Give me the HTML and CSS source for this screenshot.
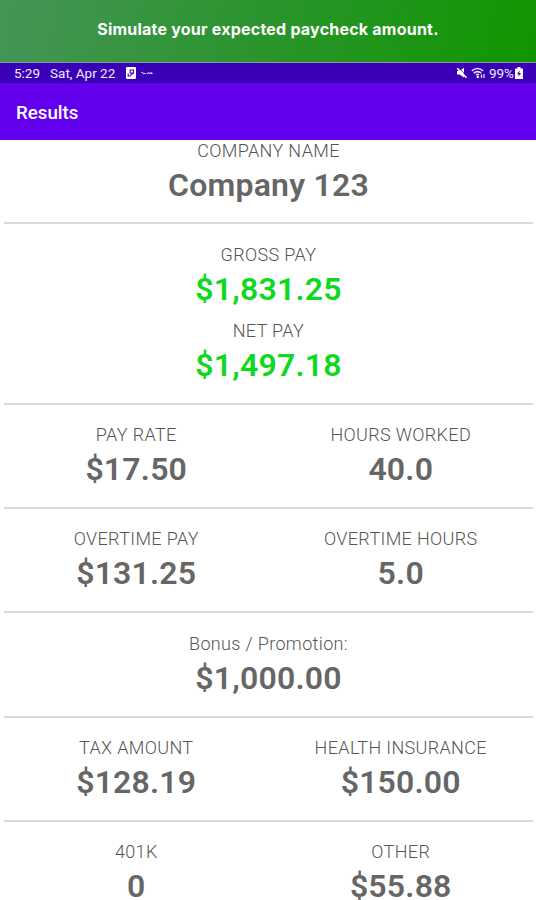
FILE: index.html
```html
<!DOCTYPE html>
<html lang="en">
<head>
  <meta charset="UTF-8">
  <meta name="viewport" content="width=device-width, initial-scale=1.0">
  <title>Results</title>
  <link rel="stylesheet" href="styles.css">
</head>
<body>

  <div class="banner"><span>Simulate your expected paycheck amount.</span></div>

  <div class="status-bar">
    <span class="time">5:29</span>
    <span class="date">Sat, Apr 22</span>
    <svg class="icon-app" width="10" height="12" viewBox="0 0 10 12">
      <rect width="10" height="12" rx="1" fill="#fff"/>
      <path d="M4.2 3H7.5V6H4.2ZM7.2 6L4.5 8.2M2.2 6.5V9H4.8" fill="none" stroke="#3a00b5" stroke-width="1.1"/>
    </svg>
    <svg class="icon-small" width="12" height="5" viewBox="0 0 12 5">
      <path d="M0.5 1L2.5 2.5H5M6 3L7.5 1.8L9 2.6L10.5 1.8L11.5 2.8" fill="none" stroke="#c9b8f0" stroke-width="1.2"/>
    </svg>
    <div class="status-right">
      <svg width="12" height="12" viewBox="0 0 12 12">
        <path d="M1 4H3.5L8 0.8V10.5L3.5 7.5H1Z" fill="#fff"/>
        <path d="M1.2 1.2L10.5 10.8" stroke="#fff" stroke-width="1.6"/>
        <path d="M3.2 1.2L10 8.2" stroke="#3a00b5" stroke-width="0.8"/>
      </svg>
      <svg class="icon-wifi" width="15" height="12" viewBox="0 0 15 12">
        <path d="M0.8 3.8Q6.5 -0.8 12.2 3.8M2.8 6Q6.5 3.2 10.2 6M5 8Q6.5 6.8 8 8" fill="none" stroke="#e4dcfa" stroke-width="1.6"/>
        <path d="M10.5 7.5V11M13 7V11" stroke="#e4dcfa" stroke-width="1.3"/>
        <circle cx="6.8" cy="10" r="1.2" fill="#fff"/>
      </svg>
      <span class="battery-text">99%</span>
      <svg class="icon-battery" width="8" height="12" viewBox="0 0 8 12">
        <path d="M2.5 0H5.5V1.5H8V12H0V1.5H2.5Z" fill="#fff"/>
        <path d="M4.8 3L2 7.2H3.8L3.3 10L6 6H4.2Z" fill="#3a00b5"/>
      </svg>
    </div>
  </div>

  <div class="app-bar">Results</div>

  <div class="results">
    <div class="row company">
      <div class="item">
        <div class="label">COMPANY NAME</div>
        <div class="value">Company 123</div>
      </div>
    </div>

    <div class="row totals">
      <div class="item">
        <div class="label">GROSS PAY</div>
        <div class="value green">$1,831.25</div>
        <div class="label">NET PAY</div>
        <div class="value green">$1,497.18</div>
      </div>
    </div>

    <div class="row">
      <div class="item">
        <div class="label">PAY RATE</div>
        <div class="value">$17.50</div>
      </div>
      <div class="item">
        <div class="label">HOURS WORKED</div>
        <div class="value">40.0</div>
      </div>
    </div>

    <div class="row">
      <div class="item">
        <div class="label">OVERTIME PAY</div>
        <div class="value">$131.25</div>
      </div>
      <div class="item">
        <div class="label">OVERTIME HOURS</div>
        <div class="value">5.0</div>
      </div>
    </div>

    <div class="row">
      <div class="item">
        <div class="label">Bonus / Promotion:</div>
        <div class="value">$1,000.00</div>
      </div>
    </div>

    <div class="row">
      <div class="item">
        <div class="label">TAX AMOUNT</div>
        <div class="value">$128.19</div>
      </div>
      <div class="item">
        <div class="label">HEALTH INSURANCE</div>
        <div class="value">$150.00</div>
      </div>
    </div>

    <div class="row last">
      <div class="item">
        <div class="label">401K</div>
        <div class="value">0</div>
      </div>
      <div class="item">
        <div class="label">OTHER</div>
        <div class="value">$55.88</div>
      </div>
    </div>
  </div>

</body>
</html>
```
FILE: styles.css
```css
* {
  box-sizing: border-box;
}

body {
  margin: 0;
  height: 900px;
  overflow: hidden;
  display: flex;
  flex-direction: column;
  font-family: Roboto, sans-serif;
  background: #fff;
}

.banner {
  height: 63px;
  flex-shrink: 0;
  padding-top: 18px;
  text-align: center;
  line-height: 22px;
  font-family: Inter, sans-serif;
  font-size: 16px;
  font-weight: 700;
  letter-spacing: 0.22px;
  color: #fff;
  background: linear-gradient(100deg, #459557 0%, #2b942d 48%, #109600 100%);
  border-bottom: 1px solid #8299a0;
}

.status-bar {
  height: 20px;
  flex-shrink: 0;
  display: flex;
  align-items: center;
  padding: 0 13px 0 14px;
  font-size: 13.5px;
  color: #f0eaff;
  background: #3a00b5;
}

.date {
  margin-left: 10px;
}

.icon-app {
  margin-left: 11px;
}

.icon-small {
  margin-left: 5px;
}

.status-right {
  display: flex;
  align-items: center;
  margin-left: auto;
}

.icon-wifi {
  margin-left: 3px;
}

.battery-text {
  margin-left: 3px;
}

.icon-battery {
  margin-left: 1px;
}

.app-bar {
  height: 57px;
  flex-shrink: 0;
  padding-left: 16px;
  line-height: 61px;
  font-size: 18.7px;
  font-weight: 500;
  color: #fff;
  background: #6200ee;
}

.results {
  flex: 1;
  min-height: 0;
  padding: 0 3px 0 4px;
}

.row {
  display: flex;
  height: 104.2px;
  padding-top: 17.2px;
  border-bottom: 2px solid #d9d9d9;
}

.company {
  height: 84px;
  padding-top: 0;
}

.company .item {
  margin-top: -2px;
}

.totals {
  height: 181px;
  padding-top: 18px;
}

.last {
  height: 79px;
  padding-top: 17px;
  border-bottom: none;
}

.item {
  flex: 1;
  text-align: center;
}

.label {
  line-height: 26px;
  font-size: 18px;
  font-weight: 300;
  letter-spacing: 0.35px;
  color: #555;
}

.value {
  padding: 8px 0 16px;
  line-height: 26px;
  font-size: 32px;
  font-weight: 600;
  letter-spacing: 0.2px;
  color: #666;
}

.last .value {
  padding-bottom: 0;
}
 
.green {
  color: #10d820;
}
```
